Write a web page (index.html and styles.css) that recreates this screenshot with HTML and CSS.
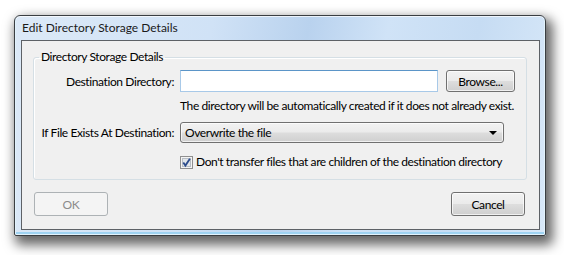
FILE: index.html
```html
<!DOCTYPE html>
<html lang="en">
<head>
  <meta charset="UTF-8">
  <title>Edit Directory Storage Details</title>
  <link rel="stylesheet" href="styles.css">
</head>
<body>
  <div class="window">
    <div class="titlebar">Edit Directory Storage Details</div>
    <div class="client">
      <fieldset class="group">
        <legend>Directory Storage Details</legend>
        <div class="form-grid">
          <label class="field-label" for="dest-dir">Destination Directory:</label>
          <div class="field-row">
            <input type="text" id="dest-dir" class="textbox">
            <button class="btn browse">Browse...</button>
          </div>

          <div></div>
          <div class="hint">The directory will be automatically created if it does not already exist.</div>

          <label class="field-label exists-label" for="exists">If File Exists At Destination:</label>
          <div class="select" id="exists">
            <span>Overwrite the file</span>
            <span class="arrow"></span>
          </div>

          <div></div>
          <label class="check">
            <span class="checkbox">
              <svg width="13" height="13" viewBox="0 0 13 13">
                <rect x="0.5" y="0.5" width="12" height="12" fill="#f4f4f4" stroke="#8f8f8f"/>
                <rect x="2.5" y="2.5" width="8" height="8" fill="#e2e6ea" stroke="#b8bec5"/>
                <path d="M3.3 6.6 L5.4 9.6 L9.9 2.8" fill="none" stroke="#2b4b8c" stroke-width="1.8"/>
              </svg>
            </span>
            Don't transfer files that are children of the destination directory
          </label>
        </div>
      </fieldset>
      <div class="actions">
        <button class="btn ok" disabled>OK</button>
        <button class="btn cancel">Cancel</button>
      </div>
    </div>
  </div>
</body>
</html>
```

FILE: styles.css
```css
html {
  background: #ffffff;
}

body {
  margin: 0;
  padding: 15px 0 20px 14px;
  font-family: Lato, "Liberation Sans", Arial, sans-serif;
  font-size: 12px;
  letter-spacing: -0.4px;
  color: #000;
}

.window {
  width: 530px;
  height: 219px;
  border: 1px solid #3a3e42;
  border-radius: 6px 6px 2px 2px;
  background: linear-gradient(100deg, #dce9f7 0%, #d0e2f6 35%, #b9d2ee 52%, #d0e3f7 66%, #c6dcf3 82%, #d9e9f9 100%);
  box-shadow: 4px 6px 12px 3px rgba(0, 0, 0, 0.6), inset 0 0 0 1px rgba(255, 255, 255, 0.7), inset 0 -2px 0 1px #9fd3f2;
}

.titlebar {
  height: 24px;
  line-height: 24px;
  padding-left: 7px;
  color: #1a1a1a;
  letter-spacing: 0;
  white-space: nowrap;
}

.client {
  height: 188px;
  margin: 0 5px 0 6px;
  padding: 0 12px 0 11px;
  border: 1px solid #5d6166;
  background: #f0f0f0;
  box-sizing: content-box;
}

.group {
  margin: 8px 0 0;
  padding: 5px 0 9px;
  border: 1px solid #d5dfe5;
  border-radius: 3px;
  box-shadow: inset 1px 1px 0 #fff;
}

.group legend {
  margin-left: 5px;
  padding: 0 2px;
  line-height: 16px;
}

.form-grid {
  display: grid;
  grid-template-columns: 140px 1fr;
  column-gap: 6px;
  align-items: center;
  white-space: nowrap;
}

.field-label {
  text-align: right;
}

.field-row {
  display: flex;
  align-items: center;
  gap: 8px;
}

.textbox {
  width: 258px;
  height: 22px;
  box-sizing: border-box;
  margin: 0;
  border: 1px solid #a8c9e8;
  border-top-color: #5b95c8;
  background: #fff;
}

.btn {
  height: 22px;
  box-sizing: border-box;
  margin: 0;
  padding: 0;
  border: 1px solid #707070;
  border-radius: 3px;
  font-family: inherit;
  font-size: 12px;
  letter-spacing: inherit;
  color: #000;
  background: linear-gradient(#f2f2f2 0%, #ebebeb 48%, #dddddd 52%, #cfcfcf 100%);
  box-shadow: inset 0 0 0 1px rgba(255, 255, 255, 0.7);
}

.browse {
  width: 69px;
}

.hint {
  margin-top: 6px;
  line-height: 16px;
}

.select {
  width: 324px;
  height: 21px;
  box-sizing: border-box;
  margin-top: 8px;
  padding: 0 6px 0 4px;
  display: flex;
  align-items: center;
  justify-content: space-between;
  border: 1px solid #707070;
  border-radius: 3px;
  background: linear-gradient(#f2f2f2 0%, #ebebeb 48%, #dddddd 52%, #cfcfcf 100%);
  box-shadow: inset 0 0 0 1px rgba(255, 255, 255, 0.7);
}

.arrow {
  width: 0;
  height: 0;
  border-left: 4px solid transparent;
  border-right: 4px solid transparent;
  border-top: 4px solid #000;
}

.exists-label {
  margin-top: 8px;
}

.check {
  margin-top: 11px;
  display: flex;
  align-items: center;
  gap: 3px;
  line-height: 16px;
}

.checkbox {
  display: flex;
  width: 13px;
  height: 13px;
}

.actions {
  display: flex;
  justify-content: space-between;
  margin-top: 12px;
  padding: 0 2px 0 1px;
}

.actions .btn {
  width: 74px;
  height: 24px;
}

.ok:disabled {
  color: #8b8b8b;
  border-color: #adb2b5;
  background: #f4f4f4;
  box-shadow: none;
}
```
